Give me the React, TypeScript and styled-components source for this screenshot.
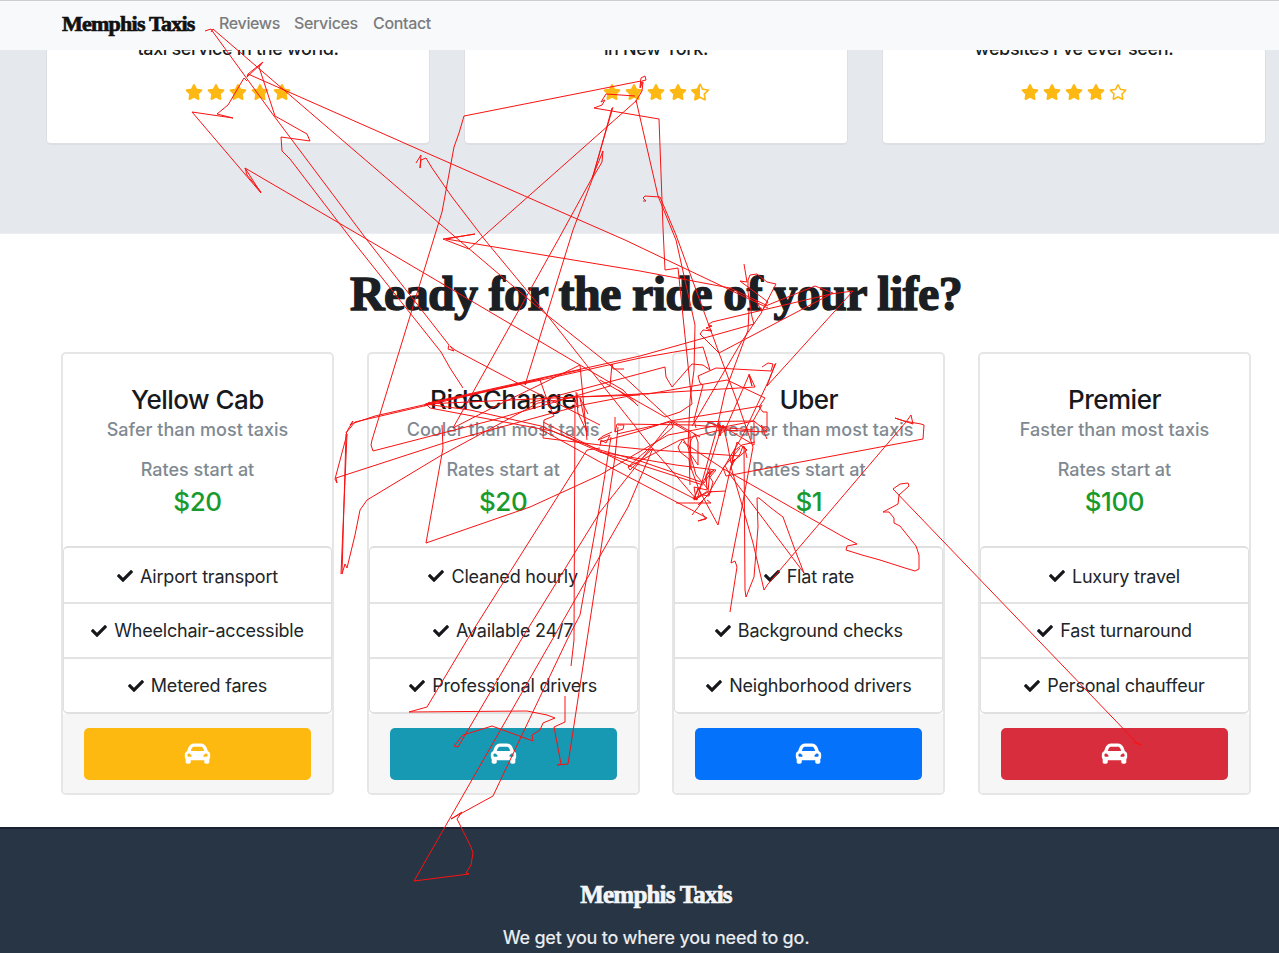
import React from 'react';
import styled, { createGlobalStyle } from 'styled-components';
import { FaStar, FaStarHalfAlt, FaRegStar, FaCheck, FaCarAlt } from 'react-icons/fa';

const GlobalStyle = createGlobalStyle`
  * { box-sizing: border-box; }
  body {
    margin: 0;
    background: #fff;
    color: #1b1e22;
    font-family: Inter, "Liberation Sans", sans-serif;
    overflow: hidden;
  }
`;

const Page = styled.div`
  position: relative;
  width: 1279px;
  height: 953px;
  overflow: hidden;
  display: flex;
  flex-direction: column;
`;

const Navbar = styled.nav`
  flex: none;
  height: 50px;
  padding: 0 0 6px 62px;
  border-top: 1px solid #ccced0;
  background: #f7f9fa;
  display: flex;
  align-items: center;
`;

const Wordmark = styled.span<{ $size: number; $spacing: number; $stroke: number }>`
  font-family: "Liberation Serif", serif;
  font-weight: 700;
  font-size: ${p => p.$size}px;
  letter-spacing: ${p => p.$spacing}px;
  -webkit-text-stroke: ${p => p.$stroke}px currentColor;
  white-space: nowrap;
`;

const Brand = styled(Wordmark)`
  color: #111;
  width: 157px;
  padding-top: 3px;
`;

const NavLink = styled.a<{ $width: number }>`
  width: ${p => p.$width}px;
  font-size: 16px;
  font-weight: 500;
  letter-spacing: -0.35px;
  color: #7b7c7d;
  white-space: nowrap;
`;

const Reviews = styled.section`
  flex: none;
  height: 184px;
  padding: 0 13px 0 46px;
  background: #e5e8ed;
  border-bottom: 1px solid #eceef1;
  display: grid;
  grid-template-columns: 384px 384px 384px;
  gap: 34px;
  align-items: start;
`;

const Review = styled.article`
  height: 95px;
  background: #fff;
  border: 1px solid #dedfe2;
  border-bottom-width: 2px;
  border-top: 0;
  border-radius: 0 0 5px 5px;
  overflow: hidden;
  display: flex;
  flex-direction: column;
  align-items: center;
`;

const Quote = styled.p`
  margin: -12px 0 0;
  font-size: 18px;
  line-height: 22px;
  font-weight: 500;
  letter-spacing: -0.35px;
`;

const Stars = styled.div`
  display: flex;
  gap: 3.8px;
  margin-top: 23px;
  color: #fdb813;
  font-size: 18px;
`;

const Offer = styled.section`
  flex: none;
  height: 593px;
  padding: 34px 28px 0 61px;
  display: flex;
  flex-direction: column;
`;

const Title = styled.h1`
  margin: 0;
  height: 84px;
  line-height: 52px;
  text-align: center;
  font-size: 0;
`;

const Cards = styled.div`
  display: grid;
  grid-template-columns: repeat(4, 273px);
  justify-content: space-between;
`;

const Card = styled.article`
  height: 443px;
  border: 2px solid #e6e6e6;
  border-radius: 5px;
  overflow: hidden;
  display: flex;
  flex-direction: column;
  text-align: center;
  white-space: nowrap;
`;

const CardBody = styled.div`
  flex: none;
  height: 192px;
  padding-top: 29px;
`;

const CardName = styled.h2`
  margin: 0;
  font-size: 26px;
  line-height: 33px;
  font-weight: 500;
  letter-spacing: -0.5px;
  color: #17191c;
`;

const Muted = styled.p<{ $gap: number }>`
  margin: ${p => p.$gap}px 0 0;
  font-size: 18px;
  line-height: 24px;
  font-weight: 500;
  letter-spacing: 0;
  color: #808991;
`;

const Price = styled.p`
  margin: 3px 0 0;
  font-size: 26px;
  line-height: 34px;
  font-weight: 500;
  letter-spacing: -0.4px;
  color: #199a2c;
`;

const Features = styled.ul`
  margin: 0;
  padding: 0;
  list-style: none;
  border: 2px solid #e0e0e0;
  border-left-width: 1px;
  border-right-width: 1px;
  border-radius: 5px;
`;

const Feature = styled.li`
  height: 55px;
  display: flex;
  align-items: center;
  justify-content: center;
  gap: 7px;
  font-size: 18px;
  letter-spacing: -0.2px;
  color: #212529;
  &:first-child { height: 54px; padding-top: 2px; }
  & + & { border-top: 2px solid #e3e3e3; }
  svg { width: 16px; height: 16px; color: #15171a; }
`;

const CardFooter = styled.div`
  flex: 1;
  padding: 14px 21px 14px;
  background: #f6f6f6;
`;

const RideButton = styled.button<{ $color: string }>`
  width: 227px;
  height: 52px;
  padding-bottom: 3px;
  border: 0;
  border-radius: 5px;
  background: ${p => p.$color};
  color: #fff;
  display: flex;
  align-items: center;
  justify-content: center;
  font-size: 27px;
`;

const Footer = styled.footer`
  flex: 1;
  padding: 52px 0 0 33px;
  border-top: 2px solid #1a2334;
  background: #273545;
  color: #f4f5f6;
  display: flex;
  flex-direction: column;
  align-items: center;
`;

const Tagline = styled.p`
  margin: 17px 0 0;
  font-size: 18px;
  line-height: 24px;
  font-weight: 500;
  letter-spacing: -0.24px;
  white-space: nowrap;
  color: #e9ebed;
`;

const Trace = styled.svg`
  position: absolute;
  left: 0;
  top: 0;
  pointer-events: none;
  fill: none;
  stroke: #fa1212;
  stroke-width: 1;
`;

const reviews = [
  { text: 'taxi service in the world.', stars: 5 },
  { text: 'in New York.', stars: 4.5 },
  { text: "websites I've ever seen.", stars: 4 },
];

const cards = [
  { name: 'Yellow Cab', sub: 'Safer than most taxis', price: '$20', color: '#fdb90f', items: ['Airport transport', 'Wheelchair-accessible', 'Metered fares'] },
  { name: 'RideChange', sub: 'Cooler than most taxis', price: '$20', color: '#1798b3', items: ['Cleaned hourly', 'Available 24/7', 'Professional drivers'] },
  { name: 'Uber', sub: 'Cheaper than most taxis', price: '$1', color: '#0472fb', items: ['Flat rate', 'Background checks', 'Neighborhood drivers'] },
  { name: 'Premier', sub: 'Faster than most taxis', price: '$100', color: '#d82d3c', items: ['Luxury travel', 'Fast turnaround', 'Personal chauffeur'] },
];

// Pointer movements, each an ordered run of page coordinates.
const paths = [
  '205,31 211,29 213,32 274,116 367,240 449,345 448,349 454,351 450,346 455,350 523,386 600,425',
  '211,32 213,29 249,60 440,224 547,315 620,373 672,421 700,437',
  '247,81 244,78 228,105 217,114 233,118 192,112 261,193 245,168 368,240 580,365 623,390 638,406 634,402 618,390',
  '261,192 247,175 245,168',
  '768,308 625,240 420,150 248,74 263,62 259,67 275,116 307,134 310,141 281,137 282,151 290,159 352,240 441,352 450,368 463,388',
  '248,74 247,77 263,62',
  '416,163 421,155 420,168 421,160 426,158 432,168 452,197 485,240 547,315 653,449 697,500',
  '640,87 641,78 645,76 646,80 642,81 640,88 643,82 642,91 636,101 469,249 443,239 475,234 446,239 640,271 730,288 768,306',
  '641,81 464,116 459,133 454,147 442,212 434,238 372,440 371,445 373,451 493,420 610,386 612,364',
  '530,403 665,367 666,377 672,387 692,364 703,365 710,370 703,347 640,358 541,380 426,404',
  '635,96 606,94 601,102 605,100 602,105 594,108 659,119 663,228 665,270 678,268 692,404 680,412 665,417 600,380',
  '636,100 658,196 676,240 695,325 694,370 690,400 688,447 696,475 708,489',
  '660,197 676,235 719,353 738,404 753,447 742,507 731,563 735,561 737,567 730,612',
  '643,201 646,201 643,198 645,196 660,197',
  '613,107 592,179 602,162 603,151 592,178 558,240 453,428 490,409 580,365 587,440',
  '612,108 592,180 573,230 525,385 527,382',
  '744,264 747,282 740,281 768,302 762,311 776,284 767,282 757,274 750,275 748,280 748,292 752,317 754,324 640,356 541,378 428,403 424,406 430,402',
  '756,300 762,312 742,341 697,418 692,426',
  '749,310 748,330 725,392 716,432 697,500',
  '853,291 831,294 712,322 708,325 712,326 706,328 712,331 703,330 700,334 719,353 833,293 815,286 768,305',
  '853,291 767,386 775,364',
  '762,367 768,363 773,364 771,371 716,368 698,376 700,383 703,385 694,420 696,428',
  '776,363 768,382 743,435 707,496',
  '426,404 640,394 648,394 727,380 765,398 759,407 763,412 767,412 767,430 761,425 767,439',
  '541,379 428,405 355,422 346,433 347,434 335,479 337,483 336,478 450,441 582,405 640,394 755,387 749,374 752,386 749,375 725,430 718,436',
  '426,404 430,408 552,431 600,450 640,461 704,483 712,471',
  '425,404 470,410 541,426 600,452 703,485',
  '346,433 353,421 350,425 354,423 375,416 445,400 580,370',
  '346,434 342,574 345,564 347,568 355,535 360,510 367,500 440,456 538,403 577,397 640,395',
  '341,574 347,434',
  '442,425 443,448 426,543 530,507 600,475 668,435 720,425',
  '540,380 549,405 554,416 544,420 543,438 600,445 640,449 740,456',
  '577,393 578,408 575,400 574,640 571,666',
  '576,392 578,413 587,432 580,398 588,414',
  '612,364 613,369 624,369',
  '615,417 615,432 617,424 693,425 753,430',
  '615,432 623,429 624,425 618,425',
  '600,446 601,440 606,443 610,435 598,440 603,436 612,432',
  '409,712 427,707 467,640 587,450 600,448',
  '409,712 527,711 547,715 555,718 543,723 540,730 532,735 533,741 492,726 463,735 454,746 458,747 521,640 600,512 671,422',
  '617,434 670,422 753,421 762,405',
  '600,442 640,431 670,421 761,406',
  '671,422 673,427 628,467 630,470 653,448 628,507 552,640 414,881 469,874 466,873 471,865 473,853 471,847 457,819 462,812 451,819 493,796 567,640 580,615 602,493 611,437',
  '565,696 565,722 554,727 561,764 557,765 568,764 587,640 615,457 618,427',
  '543,422 600,451 697,500',
  '542,430 600,462 707,518 698,521 706,519 702,513',
  '600,452 676,465 716,470 710,477',
  '628,467 680,440 720,430 726,427',
  '671,422 690,433 691,468 701,495 693,499 710,470 708,492 694,500 698,488 718,525 729,475 737,442 745,449 747,458',
  '726,476 923,439 924,425 921,424 904,421 895,418 913,424 911,415 906,422 768,584 764,590 753,543 731,467 734,451 742,445 755,442',
  '726,476 723,468 740,448',
  '732,464 740,454 743,446 747,450 731,463 735,459 730,470',
  '688,447 683,439 678,447 680,452 689,459 691,470',
  '690,485 689,450 691,440 695,434 698,442 698,465 691,455',
  '744,446 745,590 746,597 754,577 758,527 757,498 759,498 771,508 783,517 795,550 804,573 731,476 725,466',
  '683,442 722,468 840,535 857,544 847,546 846,550 862,555 880,560 905,568 915,571 919,569 919,555 916,546 900,526 894,523 894,518 889,512 883,512 898,504 899,495 909,486 908,483 900,484 893,489 1137,743 1141,745 1133,742',
  '707,422 722,427 718,423 720,436 723,425 727,442 731,463',
  '724,427 754,421 754,445 722,426 705,480',
  '722,430 767,432 754,421',
  '692,515 703,501 698,505 712,491',
  '676,503 711,503 707,500',
  '703,495 709,496 713,482 709,476 714,470 706,475 707,490 694,487 696,499 706,492 726,491',
];

function Rating({ value }: { value: number }) {
  return (
    <Stars>
      {[1, 2, 3, 4, 5].map(n =>
        value >= n ? <FaStar key={n} /> : value >= n - 0.5 ? <FaStarHalfAlt key={n} /> : <FaRegStar key={n} />
      )}
    </Stars>
  );
}

export default function App() {
  return (
    <Page>
      <GlobalStyle />
      <Navbar>
        <Brand $size={22} $spacing={-0.75} $stroke={0.7}>Memphis Taxis</Brand>
        <NavLink $width={75}>Reviews</NavLink>
        <NavLink $width={79}>Services</NavLink>
        <NavLink $width={70}>Contact</NavLink>
      </Navbar>
      <Reviews>
        {reviews.map(r => (
          <Review key={r.text}>
            <Quote>{r.text}</Quote>
            <Rating value={r.stars} />
          </Review>
        ))}
      </Reviews>
      <Offer>
        <Title>
          <Wordmark $size={48} $spacing={-0.65} $stroke={1.4}>Ready for the ride of your life?</Wordmark>
        </Title>
        <Cards>
          {cards.map(c => (
            <Card key={c.name}>
              <CardBody>
                <CardName>{c.name}</CardName>
                <Muted $gap={2}>{c.sub}</Muted>
                <Muted $gap={16}>Rates start at</Muted>
                <Price>{c.price}</Price>
              </CardBody>
              <Features>
                {c.items.map(i => (
                  <Feature key={i}><FaCheck />{i}</Feature>
                ))}
              </Features>
              <CardFooter>
                <RideButton $color={c.color} aria-label={c.name}><FaCarAlt /></RideButton>
              </CardFooter>
            </Card>
          ))}
        </Cards>
      </Offer>
      <Footer>
        <Wordmark $size={25} $spacing={-0.8} $stroke={0.7}>Memphis Taxis</Wordmark>
        <Tagline>We get you to where you need to go.</Tagline>
      </Footer>
      <Trace width="1279" height="953" viewBox="0 0 1279 953">
        {paths.map(p => <polyline key={p} points={p} />)}
      </Trace>
    </Page>
  );
}
